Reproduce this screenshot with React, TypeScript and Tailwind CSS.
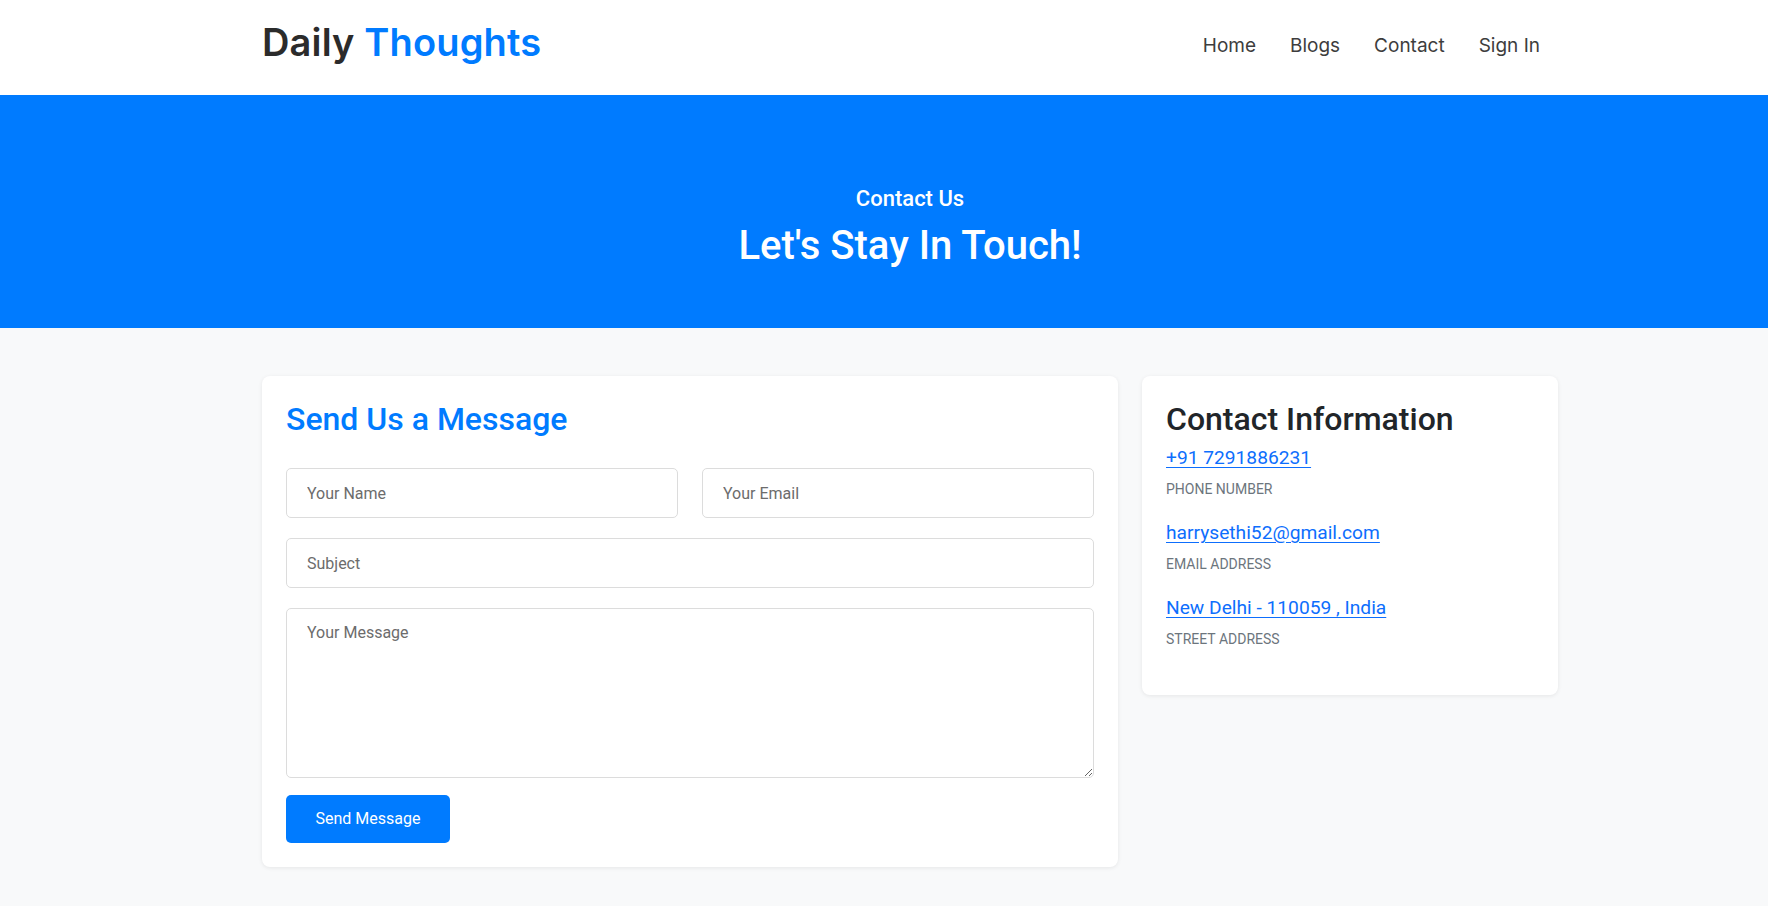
import React from "react";

export default function App() {
  const navLinks = ["Home", "Blogs", "Contact", "Sign In"];
  return (
    <div className="min-h-[906px] bg-[#f8f9fa] font-['Roboto',sans-serif] text-[#212529]">
      <header className="bg-white h-[95px]">
        <div className="ml-[250px] w-[1320px] px-3 h-full flex items-center justify-between">
          <div className="font-['Inter',sans-serif] font-semibold text-[38px] leading-none tracking-[0.15px] pb-[12px]">
            <span className="text-[#2b2b2b]">Daily </span>
            <span className="text-[#007bff]">Thoughts</span>
          </div>
          <nav className="flex items-center pb-[2px]">
            {navLinks.map((l) => (
              <a
                key={l}
                href="#"
                className="font-['Inter',sans-serif] text-[19px] text-[#3d3d3d] px-[17px] last:pr-[18px]"
              >
                {l}
              </a>
            ))}
          </nav>
        </div>
      </header>

      <section className="bg-[#007bff] h-[233px]">
        <div className="ml-[250px] w-[1320px] px-3 pt-[91px] flex flex-col items-center text-white text-center">
          <h3 className="text-[22px] font-medium leading-[1.2]">Contact Us</h3>
          <h1 className="text-[40px] font-medium leading-[1.2] mt-[10px]">Let's Stay In Touch!</h1>
        </div>
      </section>

      <main className="pt-[48px] pb-[39px]">
        <div className="ml-[250px] w-[1320px] px-3 flex gap-6 items-start">
          <div className="w-[856px] bg-white rounded-lg shadow-[0_1px_4px_rgba(0,0,0,0.08)] p-6">
            <h2 className="text-[32px] font-medium leading-[1.2] text-[#007bff] mb-[30px]">
              Send Us a Message
            </h2>
            <div className="flex gap-6 mb-5">
              <input
                placeholder="Your Name"
                className="flex-1 h-[50px] border border-[#dcdcdc] rounded-[5px] px-5 text-[16px] placeholder:text-[#6c6c6c] outline-none"
              />
              <input
                placeholder="Your Email"
                className="flex-1 h-[50px] border border-[#dcdcdc] rounded-[5px] px-5 text-[16px] placeholder:text-[#6c6c6c] outline-none"
              />
            </div>
            <input
              placeholder="Subject"
              className="block w-full h-[50px] border border-[#dcdcdc] rounded-[5px] px-5 text-[16px] placeholder:text-[#6c6c6c] outline-none mb-5"
            />
            <textarea
              placeholder="Your Message"
              className="block w-full h-[170px] border border-[#dcdcdc] rounded-[5px] px-5 py-3 text-[16px] leading-6 placeholder:text-[#6c6c6c] outline-none mb-[17px]"
            />
            <button className="w-[164px] h-[48px] bg-[#007bff] text-white text-[16px] rounded-[5px]">
              Send Message
            </button>
          </div>

          <div className="w-[416px] bg-white rounded-lg shadow-[0_1px_4px_rgba(0,0,0,0.08)] px-6 pt-6 pb-[26px]">
            <h2 className="text-[32px] font-medium leading-[1.2] text-[#212529] mb-[6px]">
              Contact Information
            </h2>
            {[
              ["+91 7291886231", "PHONE NUMBER"],
              ["harrysethi52@gmail.com", "EMAIL ADDRESS"],
              ["New Delhi - 110059 , India", "STREET ADDRESS"],
            ].map(([v, l]) => (
              <div key={l}>
                <a href="#" className="block text-[19.2px] leading-[28.8px] text-[#0d6efd] underline underline-offset-[3px] mb-[6px] w-fit">
                  {v}
                </a>
                <p className="text-[14px] leading-[21px] text-[#6c757d] mb-[19px]">{l}</p>
              </div>
            ))}
          </div>
        </div>
      </main>
    </div>
  );
}
